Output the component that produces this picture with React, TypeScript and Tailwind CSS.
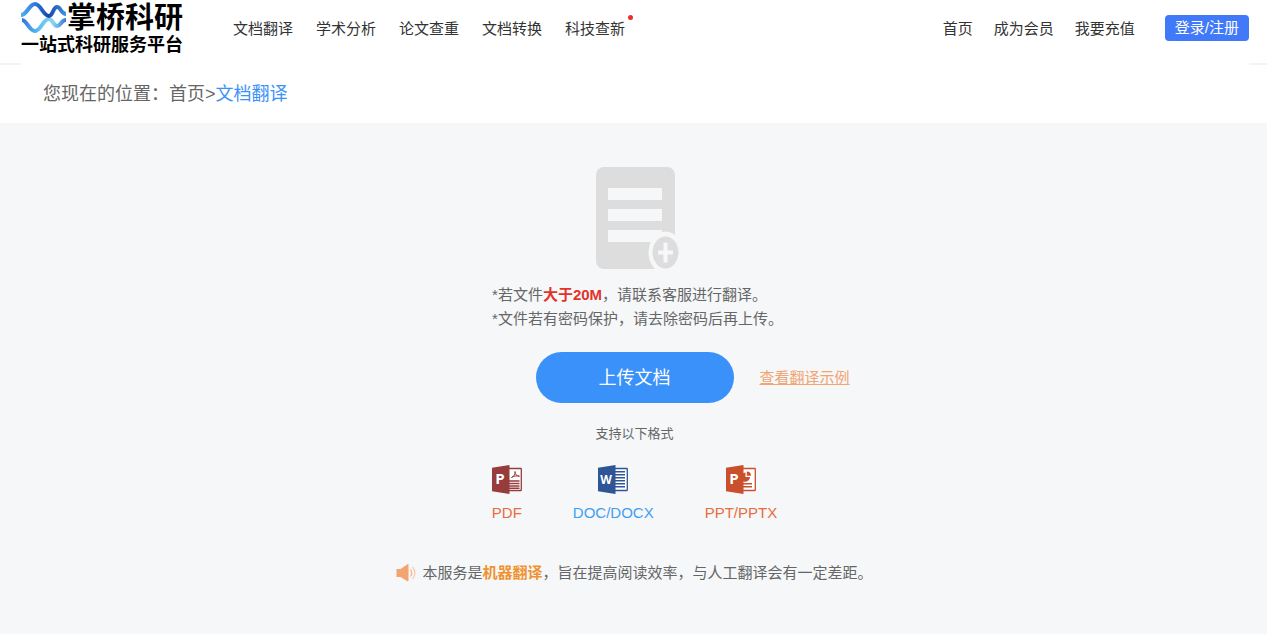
import React from 'react'

const navLinks = ['文档翻译', '学术分析', '论文查重', '文档转换', '科技查新']
const userLinks = ['首页', '成为会员', '我要充值']

const Logo: React.FC = () => {
  return (
    <a href="#" className="flex flex-col text-black font-bold">
      <span className="flex items-center h-9">
        <svg width="46" height="34" viewBox="0 0 46 34" fill="none" strokeWidth="4" aria-hidden="true">
          <defs>
            <linearGradient id="waveTop" x1="0" y1="0" x2="46" y2="0" gradientUnits="userSpaceOnUse">
              <stop offset="0" stopColor="#4db4ee" />
              <stop offset="0.35" stopColor="#2b6fdc" />
              <stop offset="0.6" stopColor="#1c46a8" />
              <stop offset="1" stopColor="#3f9be6" />
            </linearGradient>
            <linearGradient id="waveBottom" x1="0" y1="0" x2="46" y2="0" gradientUnits="userSpaceOnUse">
              <stop offset="0" stopColor="#2f6fdc" />
              <stop offset="0.4" stopColor="#5cc4f2" />
              <stop offset="0.7" stopColor="#8ad2f5" />
              <stop offset="1" stopColor="#2f6fdc" />
            </linearGradient>
          </defs>
          <path d="M1 19C6 19 8 30 14 30C20 30 22 18 28 18C32 18 32 25 36 25C40 25 40 19 45 19" stroke="url(#waveBottom)" />
          <path d="M0 14C6 14 8 3 14 3C20 3 22 15 28 15C32 15 32 6 36 6C40 6 40 13 45 13" stroke="url(#waveTop)" />
        </svg>
        <span className="text-[29px] leading-9">掌桥科研</span>
      </span>
      <span className="text-lg leading-[18px]">一站式科研服务平台</span>
    </a>
  )
}

const Header: React.FC = () => {
  return (
    <header className="bg-white">
      <div className="flex items-start pl-[21px] pr-[18px] pb-[9px] text-[15px] leading-6 text-[#333]">
        <Logo />
        <nav className="flex gap-[23px] ml-[50px] pt-[17px]">
          {navLinks.map((item) => (
            <a key={item} href="#" className="relative whitespace-nowrap">
              {item}
              {item === '科技查新' && (
                <span className="absolute -top-0.5 -right-2 w-[5px] h-[5px] rounded-full bg-[#f02d2d]" />
              )}
            </a>
          ))}
        </nav>
        <div className="flex gap-[21px] ml-auto pt-[17px]">
          {userLinks.map((item) => (
            <a key={item} href="#" className="whitespace-nowrap">{item}</a>
          ))}
        </div>
        <button className="ml-[30px] mt-[15px] h-[26px] px-2.5 rounded bg-[#417af8] text-white whitespace-nowrap cursor-pointer">
          登录/注册
        </button>
      </div>
      <div className="flex justify-between h-0.5">
        <span className="w-[21px] bg-[#f3f3f3]" />
        <span className="w-[18px] bg-[#f3f3f3]" />
      </div>
    </header>
  )
}

const DocumentIcon: React.FC = () => {
  return (
    <svg width="83" height="102" viewBox="0 0 83 102" aria-hidden="true">
      <rect width="79" height="102" rx="8" fill="#dddddd" />
      <g fill="#f5f7f9">
        <rect x="12" y="21" width="54" height="12" />
        <rect x="12" y="42" width="54" height="12" />
        <rect x="12" y="63" width="54" height="12" />
        <ellipse cx="69.500" cy="85.500" rx="17" ry="21" />
      </g>
      <ellipse cx="69.500" cy="85.500" rx="13" ry="16" fill="#dddddd" />
      <path d="M69.500 75.500v20M62 85.500h15" stroke="#f5f7f9" strokeWidth="4" />
    </svg>
  )
}

interface OfficeIconProps {
  letter: string,
  color: string,
  children: React.ReactNode
}
const OfficeIcon: React.FC<OfficeIconProps> = ({ letter, color, children }) => {
  return (
    <svg width="30" height="29" viewBox="0 0 30 29" fill="none" stroke={color} aria-hidden="true">
      <rect x="15" y="3.500" width="14.300" height="22" rx="0.500" fill="#fff" strokeWidth="1.300" />
      {children}
      <path d="M0 2.800L17.500 0v29L0 26.200z" fill={color} stroke="none" />
      <text
        x="8"
        y="19"
        textAnchor="middle"
        fill="#fff"
        stroke="none"
        fontFamily="Open Sans, sans-serif"
        fontWeight="700"
        fontSize={letter === 'W' ? 12 : 15}
      >
        {letter}
      </text>
    </svg>
  )
}

const formats = [
  {
    name: 'PDF',
    letter: 'P',
    color: '#963c3c',
    className: 'text-[#e86c3d]',
    drawing: (
      <>
        <path d="M19.500 12.500C22 11.500 23.500 9 23 6.500C23 9.500 24.500 11 27.500 11.200C24.500 10.500 21.500 11 19.500 12.500z" />
        <path d="M17 16h10.500M17 18.500h10.500M17 21h10.500M17 23.200h10.500" strokeWidth="1.400" />
      </>
    )
  },
  {
    name: 'DOC/DOCX',
    letter: 'W',
    color: '#2e5596',
    className: 'text-[#3f9ff0]',
    drawing: (
      <path d="M17 6.800h10M17 9.800h10M17 12.800h10M17 15.800h10M17 18.800h10M17 21.800h10" strokeWidth="1.500" />
    )
  },
  {
    name: 'PPT/PPTX',
    letter: 'P',
    color: '#c94f2d',
    className: 'text-[#e86c3d]',
    drawing: (
      <>
        <path d="M19.500 7.500v4.500h4.500a4.800 4.800 0 0 1-7 4.200v-8z" fill="#c94f2d" stroke="none" />
        <path d="M20.800 6.500a4.300 4.300 0 0 1 4.200 4.300h-4.200z" fill="#c94f2d" stroke="none" />
        <path d="M17 18.800h9M17 21.800h9" strokeWidth="1.500" />
      </>
    )
  }
]

const SpeakerIcon: React.FC = () => {
  return (
    <svg width="21" height="20" viewBox="0 0 21 20" fill="none" aria-hidden="true">
      <path d="M0.500 6h4L11.500 1.200q1-0.500 1 0.500v16q0 1-1 0.500L4.500 14h-4z" fill="#f2a571" />
      <path d="M14.500 6.500q2.400 3.500 0 7" stroke="#f4b78d" strokeWidth="1.300" />
      <path d="M16.500 4q4.800 6 0 12" stroke="#f7cdb0" strokeWidth="1.300" />
    </svg>
  )
}

const App: React.FC = () => {
  return (
    <div className="bg-white text-[#666] font-['Liberation_Sans','Noto_Sans_CJK_SC',sans-serif]">
      <Header />
      <div className="px-[43px] py-4 text-lg leading-[26px]">
        您现在的位置：<a href="#">首页</a>&gt;<a href="#" className="text-[#3a91f9]">文档翻译</a>
      </div>
      <main className="flex flex-col items-center bg-[#f5f7f9] pt-11 pb-[49px] pl-0.5 text-[15px] leading-6">
        <div className="flex flex-col items-center gap-3.5 pl-1.5">
          <DocumentIcon />
          <div>
            <p>*若文件<b className="text-[#e2332b]">大于20M</b>，请联系客服进行翻译。</p>
            <p>*文件若有密码保护，请去除密码后再上传。</p>
          </div>
        </div>
        <div className="grid grid-cols-[1fr_auto_1fr] items-center gap-[26px] w-full mt-[21px]">
          <button className="col-start-2 w-[198px] h-[51px] rounded-full bg-[#3a91f9] text-white text-lg cursor-pointer">
            上传文档
          </button>
          <a href="#" className="justify-self-start text-[#f2a571] underline">查看翻译示例</a>
        </div>
        <p className="mt-[21px] text-[13px] leading-5">支持以下格式</p>
        <ul className="flex gap-[51px] mt-[21px]">
          {formats.map((format) => (
            <li key={format.name} className="flex flex-col items-center gap-[7px]">
              <OfficeIcon letter={format.letter} color={format.color}>{format.drawing}</OfficeIcon>
              <span className={format.className}>{format.name}</span>
            </li>
          ))}
        </ul>
        <div className="flex items-center gap-[5px] mt-9">
          <SpeakerIcon />
          <p>本服务是<b className="text-[#f0922f]">机器翻译</b>，旨在提高阅读效率，与人工翻译会有一定差距。</p>
        </div>
      </main>
    </div>
  )
}

export default App
